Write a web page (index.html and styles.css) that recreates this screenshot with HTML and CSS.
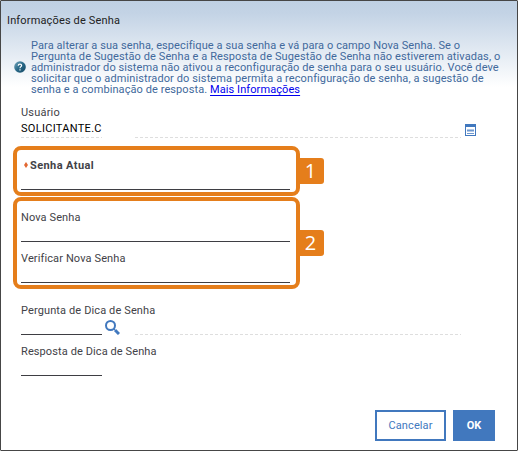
FILE: index.html
```html
<!DOCTYPE html>
<html lang="pt-BR">
<head>
<meta charset="utf-8">
<title>Informações de Senha</title>
<link rel="stylesheet" href="styles.css">
</head>
<body>
<main class="dialog">
  <h1 class="title"><span class="t-title">Informações de Senha</span></h1>
  <section class="intro">
    <svg class="help" viewBox="0 0 12 12" aria-hidden="true">
      <defs><linearGradient id="ball" x1="0" y1="0" x2="1" y2="1"><stop offset="0" stop-color="#75a7bd"/><stop offset=".5" stop-color="#286887"/><stop offset="1" stop-color="#164864"/></linearGradient></defs>
      <circle cx="6" cy="6" r="5.8" fill="url(#ball)"/>
      <path d="M4.2 4.7C4.3 2.5 7.7 2.6 7.6 4.6C7.5 5.7 6 5.7 6 7.2M6 8.2V9.5" fill="none" stroke="#fff" stroke-width="1.2"/>
    </svg>
    <p class="copy">
      <span class="l1">Para alterar a sua senha, especifique a sua senha e vá para o campo Nova Senha. Se o</span>
      <span class="l2">Pergunta de Sugestão de Senha e a Resposta de Sugestão de Senha não estiverem ativadas, o</span>
      <span class="l3">administrador do sistema não ativou a reconfiguração de senha para o seu usuário. Você deve</span>
      <span class="l4">solicitar que o administrador do sistema permita a reconfiguração de senha, a sugestão de</span>
      <span class="l5">senha e a combinação de resposta. <a href="#">Mais Informações</a></span>
    </p>
  </section>
  <section class="field user">
    <label><span class="t-user">Usuário</span></label>
    <div class="row">
      <div class="short dashed"><span class="t-value">SOLICITANTE.C</span></div>
      <div class="long dashed"></div>
      <svg class="detail" viewBox="0 0 11 12" aria-hidden="true"><path d="M0 0H11V12H0Z" fill="#4178be"/><path d="M1 3H10V11H1Z" fill="#fff"/><path d="M2 5H9V8H2Z" fill="#b4cae7"/><path d="M2 6.5H9M2 9.5H9" stroke="#6d97cf"/></svg>
    </div>
  </section>
  <section class="frame current">
    <div class="field"><label class="required"><svg class="mark" viewBox="0 0 4 6" aria-hidden="true"><path d="M2 0L4 3L2 6L0 3Z" fill="#e26832"/></svg><span class="t-current">Senha Atual</span></label><div class="input"></div></div>
    <b class="badge">1</b>
  </section>
  <section class="frame new">
    <div class="field"><label><span class="t-new">Nova Senha</span></label><div class="input"></div></div>
    <div class="field"><label><span class="t-verify">Verificar Nova Senha</span></label><div class="input"></div></div>
    <b class="badge">2</b>
  </section>
  <section class="field hint">
    <label><span class="t-hint">Pergunta de Dica de Senha</span></label>
    <div class="row">
      <div class="short solid"></div>
      <svg class="search" viewBox="0 0 15 15" aria-hidden="true"><circle cx="5.5" cy="5.5" r="4.5" fill="none" stroke="#4178be" stroke-width="2"/><path d="M8.8 8.8L10.3 10.3" stroke="#4178be"/><path d="M10 10L14 14" stroke="#4178be" stroke-width="3"/></svg>
      <div class="long dashed"></div>
    </div>
  </section>
  <section class="field answer">
    <label><span class="t-answer">Resposta de Dica de Senha</span></label>
    <div class="row"><div class="short solid"></div></div>
  </section>
  <footer class="actions">
    <button class="cancel"><span class="t-cancel">Cancelar</span></button>
    <button class="ok"><span class="t-ok">OK</span></button>
  </footer>
</main>
</body>
</html>
```
FILE: styles.css
```css
* { box-sizing: border-box; }
body { margin: 0; font: 11px/13px Roboto, "Liberation Sans", sans-serif; color: #424247; }
.dialog {
  width: 518px; height: 451px; overflow: hidden;
  border: 1px solid #464646; border-radius: 1px;
  background: linear-gradient(#bfd0e3 0, #c3d3e5 12px, #fff 86px, #fff);
}
.title { margin: 13px 0 0 6px; height: 13px; font: inherit; color: #222; white-space: nowrap; }
.t-title { letter-spacing: .15px; }
.intro { display: flex; margin: 13px 0 0 13px; height: 57px; }
.help { width: 12px; height: 12px; margin: 21px 5px 0 0; flex: none; }
.copy { margin: 0; line-height: 11px; color: #41699c; }
.copy span { display: block; width: max-content; white-space: nowrap; }
.copy .l1 { letter-spacing: .09px; }
.copy .l2 { letter-spacing: .1px; }
.copy .l3 { letter-spacing: .083px; }
.copy .l4 { letter-spacing: .105px; }
.copy .l5 { letter-spacing: .083px; }
.copy a { color: #00e; text-decoration: underline; text-underline-offset: 2px; text-decoration-thickness: 1px; }
label { display: block; height: 13px; white-space: nowrap; }
.t-user { letter-spacing: .2px; }
.t-current { letter-spacing: .4px; }
.t-new { letter-spacing: .1px; }
.t-verify, .t-hint { letter-spacing: .12px; }
.t-answer, .t-cancel { letter-spacing: .1px; }
.row { display: flex; align-items: flex-end; height: 18px; }
.user { margin: 9px 0 0 20px; height: 40px; }
.short { width: 81px; height: 16px; flex: none; }
.long { width: 326px; height: 16px; flex: none; }
.dashed { border-bottom: 1px solid transparent; background: repeating-linear-gradient(90deg, #dedede 0 3px, transparent 3px 5px) left bottom / 100% 1px no-repeat border-box; }
.user .row { height: 19px; }
.user .long { margin-left: 33px; }
.t-value { display: inline-block; color: #000; letter-spacing: .3px; white-space: nowrap; }
.detail { width: 11px; height: 12px; margin: 0 0 2px 4px; }
.frame { position: relative; width: 287px; margin-left: 12px; padding-left: 4px; border: 4px solid #e57e1b; border-radius: 8px; }
.current { height: 50px; padding-top: 9px; }
.new { height: 92px; margin-top: 1px; padding-top: 10px; }
.input { width: 269px; height: 18px; border-bottom: 1px solid #3e3e43; }
.frame .field + .field { margin-top: 10px; }
.required { display: flex; padding-left: 3px; font-weight: 700; }
.mark { width: 4px; height: 6px; margin: 3px 2px 0 0; }
.badge { position: absolute; left: 281px; width: 26px; height: 26px; border-radius: 0 3px 3px 0; background: #e57e1b; color: #fff; font: 20px/26px "Open Sans", sans-serif; text-align: center; padding-right: 1px; }
.current .badge { top: 8px; }
.new .badge { top: 29px; }
.hint { margin: 15px 0 0 20px; height: 41px; }
.solid { border-bottom: 1px solid #3e3e43; }
.search { width: 15px; height: 15px; margin: 0 15px 0 3px; flex: none; }
.answer { margin-left: 20px; height: 31px; }
.actions { display: flex; justify-content: flex-end; gap: 7px; margin: 34px 22px 0 0; }
button { height: 31px; padding: 0; border: 2px solid #4178be; font: inherit; }
.cancel { width: 71px; color: #4178be; background: #fff; }
.ok { width: 42px; color: #fff; background: #4178be; font-weight: 700; }
```
